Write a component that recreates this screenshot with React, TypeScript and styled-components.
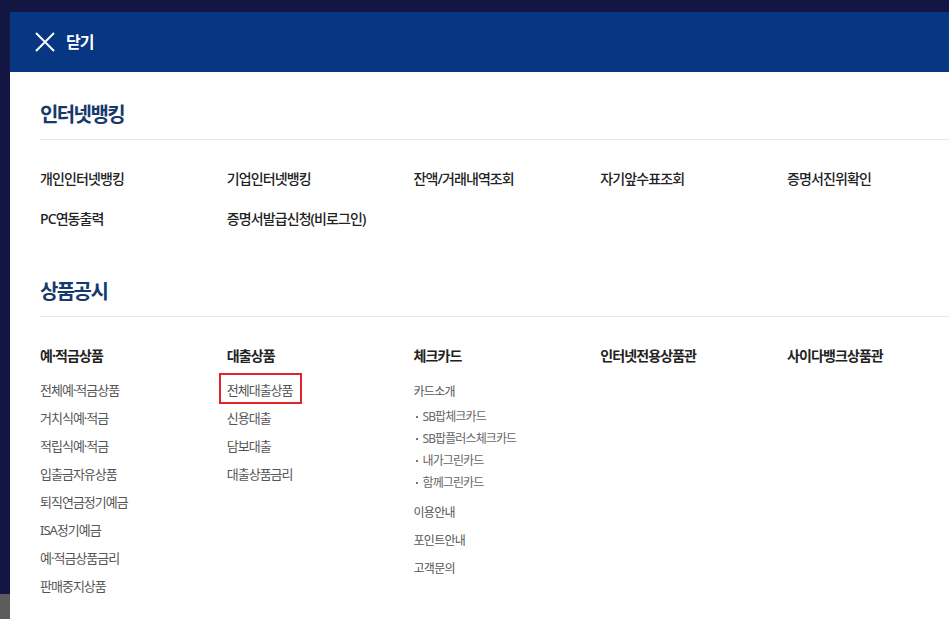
import React from "react";
import styled, { createGlobalStyle } from "styled-components";

const GlobalStyle = createGlobalStyle`
  html, body {
    margin: 0;
    padding: 0;
    height: 100%;
    overflow: hidden;
    background: #131642;
  }
  body {
    font-family: "Noto Sans", "Noto Sans CJK KR", sans-serif;
  }
  #root { height: 100%; }
`;

const Page = styled.div`
  position: relative;
  height: 100%;
  padding: 12px 0 0 10px;
  box-sizing: border-box;
`;

const UnderlayPatch = styled.div`
  position: absolute;
  left: 0;
  bottom: 0;
  width: 10px;
  height: 25px;
  background: #5c5c5c;
`;

const Modal = styled.div`
  width: 1000px;
  height: 100%;
  background: #ffffff;
  display: flex;
  flex-direction: column;
`;

const Header = styled.header`
  height: 60px;
  background: #073682;
  display: flex;
  align-items: center;
  padding-left: 25px;
  gap: 11px;
  flex-shrink: 0;
`;

const CloseText = styled.span`
  color: #ffffff;
  font-size: 16px;
  font-weight: 700;
  letter-spacing: -1px;
  line-height: 20px;
`;

const Body = styled.div`
  padding: 0 0 0 30px;
`;

const Section = styled.section<{ $top: number }>`
  padding-top: ${(p) => p.$top}px;
`;

const SectionTitle = styled.h2`
  margin: 0;
  font-size: 20px;
  font-weight: 700;
  line-height: 28px;
  letter-spacing: -1.6px;
  color: #173a6d;
  padding-bottom: 10px;
  border-bottom: 1px solid #e6e6e6;
`;

const LinkGrid = styled.div`
  display: grid;
  grid-template-columns: repeat(5, 186.75px);
  row-gap: 20px;
  margin-top: 29px;
`;

const LinkItem = styled.span`
  font-size: 14px;
  font-weight: 500;
  line-height: 20px;
  letter-spacing: -0.9px;
  color: #222222;
  white-space: nowrap;
`;

const ColumnGrid = styled.div`
  display: grid;
  grid-template-columns: repeat(5, 186.75px);
  margin-top: 29px;
  align-items: start;
`;

const Column = styled.div`
  display: flex;
  flex-direction: column;
`;

const ColumnHead = styled.h3`
  margin: 0 0 14px;
  font-size: 14px;
  font-weight: 700;
  line-height: 20px;
  letter-spacing: -0.9px;
  color: #222222;
  white-space: nowrap;
`;

const SubList = styled.ul<{ $offset?: number }>`
  list-style: none;
  margin: 0;
  padding: ${(p) => p.$offset ?? 0}px 0 0;
  display: flex;
  flex-direction: column;
  gap: 8px;
`;

const SubItem = styled.li<{ $small?: boolean; $after?: number }>`
  position: relative;
  font-size: ${(p) => (p.$small ? "12px" : "13px")};
  line-height: 20px;
  letter-spacing: ${(p) => (p.$small ? "-0.7px" : "-1px")};
  color: #555555;
  white-space: nowrap;
  margin-top: ${(p) => p.$after ?? 0}px;
`;

const Highlight = styled.span`
  position: relative;
  &::after {
    content: "";
    position: absolute;
    left: -8px;
    right: -9px;
    top: -8px;
    bottom: -5px;
    border: 2px solid #e1232b;
  }
`;

const BulletList = styled.ul`
  list-style: none;
  margin: 4px 0 0;
  padding: 0;
  display: flex;
  flex-direction: column;
`;

const Bullet = styled.li`
  display: flex;
  align-items: center;
  font-size: 12px;
  line-height: 22px;
  letter-spacing: -0.9px;
  color: #666666;
  white-space: nowrap;
  &::before {
    content: "";
    width: 2px;
    height: 2px;
    background: #777777;
    margin: 0 5px 0 2px;
  }
`;

const CloseIcon = () => (
  <svg width="20" height="20" viewBox="0 0 20 20" aria-hidden="true">
    <path d="M1 1 L19 19 M19 1 L1 19" stroke="#ffffff" strokeWidth="2" fill="none" />
  </svg>
);

const bankingLinks = [
  "개인인터넷뱅킹",
  "기업인터넷뱅킹",
  "잔액/거래내역조회",
  "자기앞수표조회",
  "증명서진위확인",
  "PC연동출력",
  "증명서발급신청(비로그인)",
];

const depositItems = [
  "전체예·적금상품",
  "거치식예·적금",
  "적립식예·적금",
  "입출금자유상품",
  "퇴직연금정기예금",
  "ISA정기예금",
  "예·적금상품금리",
  "판매중지상품",
];

const loanItems = ["전체대출상품", "신용대출", "담보대출", "대출상품금리"];

const cardBullets = ["SB팝체크카드", "SB팝플러스체크카드", "내가그린카드", "함께그린카드"];

export default function App() {
  return (
    <>
      <GlobalStyle />
      <Page>
        <UnderlayPatch />
        <Modal>
          <Header>
            <CloseIcon />
            <CloseText>닫기</CloseText>
          </Header>
          <Body>
            <Section $top={29}>
              <SectionTitle>인터넷뱅킹</SectionTitle>
              <LinkGrid>
                {bankingLinks.map((t) => (
                  <LinkItem key={t}>{t}</LinkItem>
                ))}
              </LinkGrid>
            </Section>
            <Section $top={49}>
              <SectionTitle>상품공시</SectionTitle>
              <ColumnGrid>
                <Column>
                  <ColumnHead>예·적금상품</ColumnHead>
                  <SubList>
                    {depositItems.map((t) => (
                      <SubItem key={t}>{t}</SubItem>
                    ))}
                  </SubList>
                </Column>
                <Column>
                  <ColumnHead>대출상품</ColumnHead>
                  <SubList>
                    {loanItems.map((t, i) => (
                      <SubItem key={t}>{i === 0 ? <Highlight>{t}</Highlight> : t}</SubItem>
                    ))}
                  </SubList>
                </Column>
                <Column>
                  <ColumnHead>체크카드</ColumnHead>
                  <SubList $offset={2}>
                    <SubItem $small>
                      카드소개
                      <BulletList>
                        {cardBullets.map((t) => (
                          <Bullet key={t}>{t}</Bullet>
                        ))}
                      </BulletList>
                    </SubItem>
                    <SubItem $small $after={1}>이용안내</SubItem>
                    <SubItem $small>포인트안내</SubItem>
                    <SubItem $small>고객문의</SubItem>
                  </SubList>
                </Column>
                <Column>
                  <ColumnHead>인터넷전용상품관</ColumnHead>
                </Column>
                <Column>
                  <ColumnHead>사이다뱅크상품관</ColumnHead>
                </Column>
              </ColumnGrid>
            </Section>
          </Body>
        </Modal>
      </Page>
    </>
  );
}
